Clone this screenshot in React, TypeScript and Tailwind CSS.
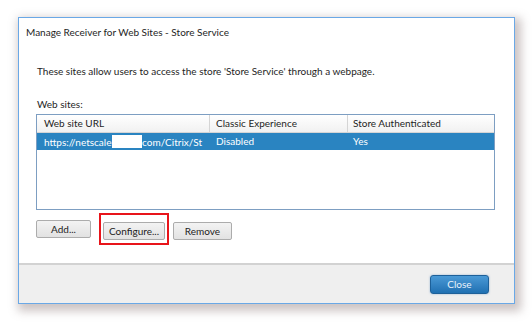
const font = "font-['Lato','Segoe_UI',sans-serif]";

function Btn({ label, w }: { label: string; w: string }) {
  return (
    <button
      className={`${w} h-[18px] rounded-[2px] border border-[#acacac] bg-gradient-to-b from-[#f3f3f3] to-[#e2e2e2] text-[10px] leading-[16px] text-[#222]`}
    >
      {label}
    </button>
  );
}

export default function App() {
  return (
    <div className={`w-[532px] h-[322px] bg-white overflow-hidden ${font}`}>
      {/* Dialog window */}
      <div className="ml-[18px] mt-[17px] w-[497px] h-[287px] flex flex-col bg-white border border-[#6aa8e6] shadow-[3px_4px_9px_3px_rgba(120,100,100,0.38)]">
        <div className="px-[7px] pt-[6px] h-[29px] text-[10px] leading-[16px] text-[#1e1e1e]">
          Manage Receiver for Web Sites - Store Service
        </div>

        <div className="flex-1 flex flex-col pl-[17px] pr-[19px]">
          <p className="mt-[16px] pl-[1px] text-[10px] leading-[16px] text-[#1e1e1e]">
            These sites allow users to access the store 'Store Service' through a webpage.
          </p>
          <p className="mt-[17px] pl-[1px] text-[10px] leading-[16px] text-[#1e1e1e]">
            Web sites:
          </p>

          {/* Table */}
          <div className="mt-[2px] h-[96px] border border-[#7d9ec2] bg-white text-[10px] leading-[16px]">
            <div className="flex h-[18px] border-b border-[#d5d5d5] bg-gradient-to-b from-white to-[#f1f1f1] text-[#1e1e1e]">
              <div className="w-[173px] pl-[7px] border-r border-[#d5d5d5]">Web site URL</div>
              <div className="w-[138px] pl-[6px] border-r border-[#d5d5d5]">Classic Experience</div>
              <div className="flex-1 pl-[5px]">Store Authenticated</div>
            </div>
            <div className="flex h-[17px] bg-[#2a84c1] text-white">
              <div className="w-[173px] pl-[7px] flex items-center overflow-hidden whitespace-nowrap">
                <span className="shrink-0">https://netscaler</span>
                <span className="-ml-[3px] inline-block w-[30px] h-[13px] bg-white shrink-0" />
                <span className="shrink-0">com/Citrix/St</span>
              </div>
              <div className="w-[138px] pl-[6px]">Disabled</div>
              <div className="flex-1 pl-[5px]">Yes</div>
            </div>
          </div>

          {/* Buttons */}
          <div className="mt-[3px] flex items-center">
            <Btn label="Add..." w="w-[55px]" />
            <div className="ml-[8px] p-[2px] border-2 border-[#e8141a]">
              <Btn label="Configure..." w="w-[62px]" />
            </div>
            <div className="ml-[4px]">
              <Btn label="Remove" w="w-[59px]" />
            </div>
          </div>
        </div>

        {/* Footer */}
        <div className="h-[40px] border-t-2 border-[#d2d2d2] bg-[#efefef] flex items-center justify-end pr-[25px]">
          <button className="w-[59px] h-[19px] rounded-[3px] border border-[#1d6099] bg-gradient-to-b from-[#4a9ad6] to-[#1f70b2] text-[10px] leading-[16px] text-[#eaf2fa] shadow-[0_0_2px_rgba(40,110,180,0.5)]">
            Close
          </button>
        </div>
      </div>
    </div>
  );
}
